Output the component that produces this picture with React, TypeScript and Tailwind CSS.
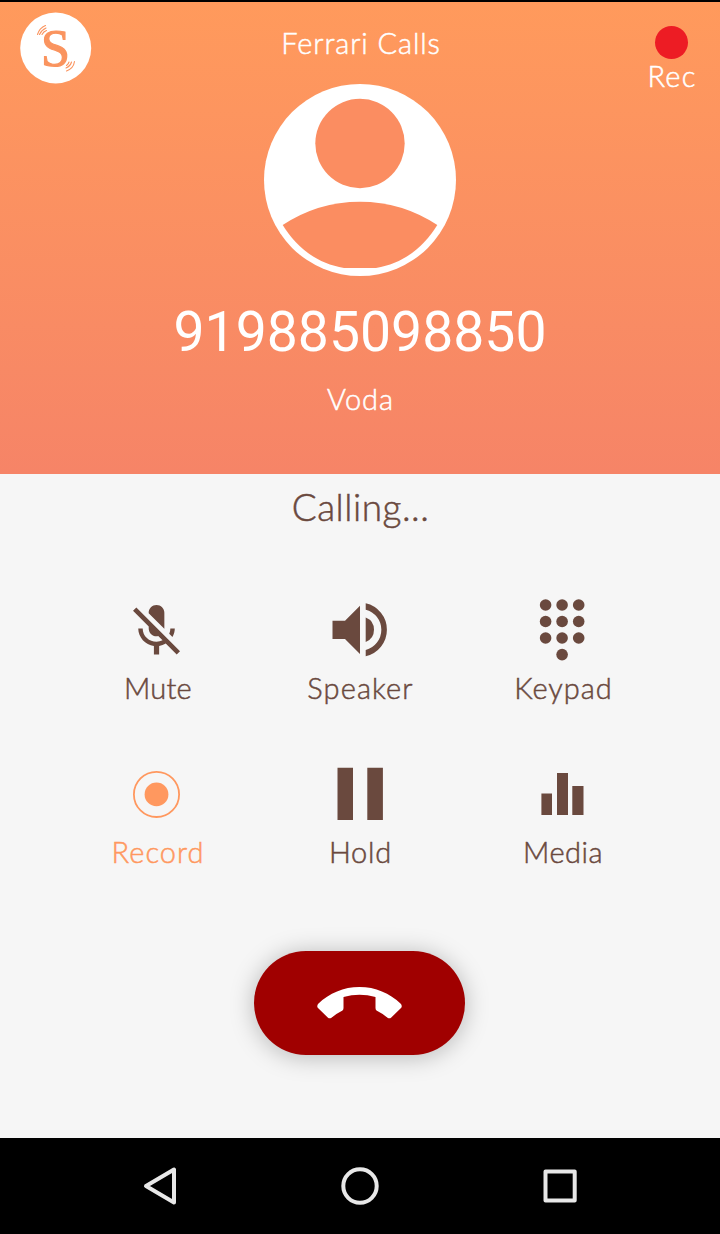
import React from 'react';
import { clsx } from 'clsx';

interface CallAction {
  label: string;
  icon: React.ReactNode;
  spacing: string;
  active?: boolean;
}

const Logo: React.FC = () => (
  <svg viewBox="0 0 72 72" className="w-[72px] h-[72px]">
    <circle cx="35.7" cy="36" r="35.5" fill="#fff" />
    <text x="35.5" y="53.8" textAnchor="middle" fill="#fa945f" stroke="#fa945f" strokeWidth="1.2" fontFamily="Liberation Serif, serif" fontSize="52">
      S
    </text>
    <g fill="none" stroke="#fa945f" strokeWidth="1.1" strokeLinecap="round">
      <path d="M17.5 22.5Q19.5 16 25.5 13.5" />
      <path d="M19.5 22.5Q21.5 18 26 16" />
      <path d="M22 22.5Q23.5 19.5 26.5 18.5" />
      <path d="M54.5 49.5Q53.5 56.5 46.5 59" />
      <path d="M51.5 50Q50.5 54 46 56" />
      <path d="M49 50Q48.5 52 46.5 53.5" />
    </g>
  </svg>
);

const Avatar: React.FC = () => (
  <svg viewBox="0 0 192 192" className="w-48 h-48">
    <circle cx="96" cy="96" r="96" fill="#fff" />
    <circle cx="96" cy="59.5" r="44.7" fill="#fb8d61" />
    <path d="M18.7 141Q54 117.7 96 117.7Q138 117.7 173.3 141C159 164 139 179.5 112 184H80C53 179.5 33 164 18.7 141Z" fill="#fb8d61" />
  </svg>
);

const MuteIcon = (
  <svg viewBox="0 0 64 64" className="w-16 h-16" fill="currentColor">
    <path
      transform="translate(-.8 1.7) scale(2.61)"
      d="M19 11h-1.7c0 .74-.16 1.43-.43 2.05l1.23 1.23c.56-.98.9-2.09.9-3.28zm-4.02.17c0-.06.02-.11.02-.17V5c0-1.66-1.34-3-3-3S9 3.34 9 5v.18l5.98 5.99zM4.27 3L3 4.27l6.01 6.01V11c0 1.66 1.33 3 2.99 3 .22 0 .44-.03.65-.08l1.66 1.66c-.71.33-1.5.52-2.31.52-2.76 0-5.3-2.1-5.3-5.1H5c0 3.41 2.72 6.23 6 6.72V21h2v-3.28c.91-.13 1.77-.45 2.54-.9L19.73 21 21 19.73 4.27 3z"
    />
  </svg>
);

const SpeakerIcon = (
  <svg viewBox="0 0 64 64" className="w-16 h-16" fill="currentColor">
    <path d="M4.5 22.8H17L32 7.7V56L17 41H4.5Z" />
    <path d="M37.7 19.5A13.2 13.2 0 0 1 37.7 44Z" />
    <path d="M37.7 5.3A27.1 27.1 0 0 1 37.7 58.2V52A20.8 20.8 0 0 0 37.7 11.7Z" />
  </svg>
);

const KeypadIcon = (
  <svg viewBox="0 0 64 64" className="w-16 h-16" fill="currentColor">
    {[7, 23.5, 40].map((y) =>
      [15.6, 32.1, 48.7].map((x) => <circle key={`${x}-${y}`} cx={x} cy={y} r="5.8" />)
    )}
    <circle cx="32.1" cy="56.6" r="5.8" />
  </svg>
);

const RecordIcon = (
  <svg viewBox="0 0 64 64" className="w-16 h-16">
    <circle cx="30.5" cy="32.4" r="22.6" fill="none" stroke="currentColor" strokeWidth="1.8" />
    <circle cx="30.5" cy="32.4" r="11.9" fill="currentColor" />
  </svg>
);

const HoldIcon = (
  <svg viewBox="0 0 64 64" className="w-16 h-16" fill="currentColor">
    <path d="M9.5 5.7H25V58H9.5ZM39.3 5.7H54.9V58H39.3Z" />
  </svg>
);

const MediaIcon = (
  <svg viewBox="0 0 64 64" className="w-16 h-16" fill="currentColor">
    <path d="M11.4 31.5H22V53H11.4ZM27 11H38V53H27ZM42.3 24H53.5V53H42.3Z" />
  </svg>
);

const actions: CallAction[] = [
  { label: 'Mute', icon: MuteIcon, spacing: 'tracking-[0.2px]' },
  { label: 'Speaker', icon: SpeakerIcon, spacing: 'tracking-[1.1px] pl-px' },
  { label: 'Keypad', icon: KeypadIcon, spacing: 'tracking-[1px] pl-[3px]' },
  { label: 'Record', icon: RecordIcon, spacing: 'tracking-[1px]', active: true },
  { label: 'Hold', icon: HoldIcon, spacing: 'tracking-[0.8px] pl-px' },
  { label: 'Media', icon: MediaIcon, spacing: 'tracking-[0.5px] pl-0.5' },
];

const ActionButton: React.FC<CallAction> = ({ label, icon, spacing, active = false }) => (
  <button className={clsx('flex flex-col items-center', active ? 'text-[#ff985f]' : 'text-[#6a493e]')}>
    {icon}
    <span className={clsx('mt-2.5 text-[29px] leading-8', spacing)}>{label}</span>
  </button>
);

const CallHeader: React.FC = () => (
  <header className="h-[472px] grid grid-cols-[160px_1fr_160px] bg-linear-to-b from-[#ff9a5c] to-[#f68467] text-white">
    <div className="pl-5 pt-2.5">
      <Logo />
    </div>
    <div className="flex flex-col items-center pt-[25px]">
      <h1 className="text-[29px] leading-8 tracking-[0.9px] pl-0.5">Ferrari Calls</h1>
      <div className="mt-[25px]">
        <Avatar />
      </div>
      <p className="mt-[25px] font-[Roboto,sans-serif] font-normal text-[55.3px] leading-[64px] [-webkit-text-stroke-width:0]">
        919885098850
      </p>
      <p className="mt-[18px] text-[29px] leading-8 tracking-[0.9px] pl-px">Voda</p>
    </div>
    <div className="flex flex-col items-center pt-6 pl-[63px]">
      <span className="w-[33px] h-[33px] rounded-full bg-[#ed1c24]" />
      <span className="mt-px text-[29px] leading-8 tracking-[1.2px] pl-px">Rec</span>
    </div>
  </header>
);

const NavBar: React.FC = () => (
  <nav className="h-24 bg-black flex justify-center gap-[136px]">
    <svg viewBox="0 0 64 96" className="w-16 h-24" fill="none" stroke="#e8e8e8" strokeWidth="4" strokeLinejoin="round">
      <path d="M18 48L46 31.5V64.5Z" />
    </svg>
    <svg viewBox="0 0 64 96" className="w-16 h-24" fill="none" stroke="#e8e8e8" strokeWidth="4">
      <circle cx="32" cy="48" r="16.7" />
    </svg>
    <svg viewBox="0 0 64 96" className="w-16 h-24" fill="none" stroke="#e8e8e8" strokeWidth="4" strokeLinejoin="round">
      <path d="M17.5 33.5H46.7V62.5H17.5Z" />
    </svg>
  </nav>
);

const App: React.FC = () => {
  return (
    <div className="w-[720px] h-[1234px] flex flex-col overflow-hidden bg-[#f6f6f6] font-[Lato,sans-serif] font-light [-webkit-text-stroke-width:0.5px]">
      <div className="h-0.5 bg-black" />
      <CallHeader />
      <main className="flex-1 flex flex-col items-center text-[#6a493e]">
        <h2 className="mt-[11px] text-[37px] leading-[44px] font-light tracking-[0.5px] pl-px">Calling...</h2>
        <div className="mt-[69px] w-[606px] grid grid-cols-3 gap-y-[58px]">
          {actions.map((action) => (
            <ActionButton key={action.label} {...action} />
          ))}
        </div>
        <button
          aria-label="End call"
          className="mt-[83px] mr-px w-[211px] h-[104px] rounded-full bg-[#a00000] shadow-[0_2px_24px_rgba(0,0,0,0.26)] flex items-center justify-center"
        >
          <svg viewBox="0.5 0 86 32" className="w-[86px] h-8" fill="#fff">
            <path d="M1.5 17C13 6 27 0 43 0S73 6 84.5 17Q86 19.5 84.5 21L74.5 30.7Q73 32 71 30.7Q66 26.5 60 23.5Q59 22.5 59 21V10Q43 5.5 27 10V21Q27 22.5 26 23.5Q20 26.5 15 30.7Q13 32 11.5 30.7L1.5 21Q0 19.5 1.5 17Z" />
          </svg>
        </button>
      </main>
      <NavBar />
    </div>
  );
};

export default App;
